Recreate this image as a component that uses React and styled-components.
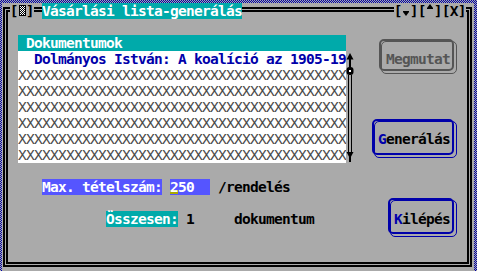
import React from "react";
import styled, { createGlobalStyle, css } from "styled-components";

const C = {
  gray: "#aaaaaa",
  teal: "#00aaaa",
  blue: "#0000aa",
  lblue: "#5555ff",
  dgray: "#555555",
  white: "#ffffff",
  black: "#000000",
  olive: "#aaaa00",
};

const GlobalStyle = createGlobalStyle`
  html, body { margin: 0; padding: 0; }
  body {
    width: 477px;
    height: 271px;
    overflow: hidden;
    background-color: ${C.gray};
    background-image: conic-gradient(${C.blue} 25%, transparent 0 50%, ${C.blue} 0 75%, transparent 0);
    background-size: 2px 2px;
  }
`;

const Screen = styled.div`
  box-sizing: border-box;
  width: 477px;
  height: 271px;
  padding: 3px 3px 0 2px;
  overflow: hidden;
`;

const Window = styled.div`
  display: grid;
  grid-template-columns: repeat(59, 8px);
  grid-template-rows: repeat(17, 16px);
  background: ${C.gray};
  font-family: "DejaVu Sans Mono", monospace;
  font-weight: bold;
  font-size: 14.5px;
  letter-spacing: -0.73px;
  line-height: 16px;
  color: ${C.black};
  white-space: pre;
`;

const place = css`
  grid-column: ${(p) => p.$col} / span ${(p) => p.$span || 1};
  grid-row: ${(p) => p.$row} / span ${(p) => p.$rows || 1};
`;

/* window frame: double line drawn as two nested outlines */
const Frame = styled.div`
  grid-column: 1 / -1;
  grid-row: 1 / -1;
  margin: 4px 2px 8px 1px;
  border: 2px solid ${C.black};
  padding: 1px;
  display: flex;
`;
const FrameInner = styled.div`
  flex: 1;
  border: 2px solid ${C.black};
`;

const TitleGroup = styled.div`
  ${place}
  display: flex;
  background: ${C.gray};
`;

const Cell = styled.span`
  display: flex;
  width: 8px;
  height: 16px;
  letter-spacing: 0;
  justify-content: center;
  align-items: ${(p) => p.$align || "center"};
`;

const Dither = styled.span`
  box-sizing: border-box;
  width: 7px;
  height: 11px;
  margin-top: 2px;
  border: 1px solid ${C.black};
  background-color: ${C.white};
  background-image: conic-gradient(${C.black} 25%, transparent 0 50%, ${C.black} 0 75%, transparent 0);
  background-size: 2px 2px;
`;

const TitleText = styled.div`
  ${place}
  background: ${C.teal};
  color: ${C.white};
`;

const ListHeader = styled.div`
  ${place}
  background: ${C.teal};
  color: ${C.white};
  padding-left: 8px;
`;

const ListBody = styled.div`
  ${place}
  background: ${C.white};
  display: flex;
  flex-direction: column;
  overflow: hidden;
`;

const ListRow = styled.div`
  height: 16px;
  flex: none;
  overflow: hidden;
  padding-left: ${(p) => p.$indent || 0}px;
  color: ${(p) => p.$fg || C.black};
  font-weight: ${(p) => (p.$thin ? "normal" : "bold")};
`;

const ScrollBar = styled.div`
  ${place}
  display: flex;
`;

const Button = styled.div`
  ${place}
  position: relative;
  box-sizing: border-box;
  margin: ${(p) => `-${p.$pad[0]}px -${p.$pad[1]}px -${p.$pad[2]}px -${p.$pad[3]}px`};
  padding: ${(p) => `${p.$pad[0] - 2}px ${p.$pad[1] - 2}px ${p.$pad[2] - 2}px ${p.$pad[3] - 2}px`};
  border: 2px solid ${(p) => p.$tone};
  border-radius: 5px;
  color: ${(p) => (p.$disabled ? C.dgray : C.black)};
  &::after {
    content: "";
    position: absolute;
    left: 0;
    top: 0;
    right: -5px;
    bottom: -5px;
    border: 1px solid ${(p) => p.$tone};
    border-radius: 5px;
  }
`;

const Hotkey = styled.span`
  color: ${C.blue};
`;

const FieldLabel = styled.div`
  ${place}
  background: ${(p) => p.$bg};
  color: ${C.white};
`;

const FieldInput = styled.div`
  ${place}
  display: flex;
  background: ${C.lblue};
  color: ${C.white};
`;

const CursorChar = styled.span`
  display: block;
  width: 8px;
  height: 16px;
  background: linear-gradient(to top, transparent 1px, ${C.olive} 1px, ${C.olive} 5px, transparent 5px);
`;

const PlainText = styled.div`
  ${place}
  color: ${C.black};
`;

const ArrowDown = () => (
  <svg width="8" height="16" viewBox="0 0 8 16">
    <polygon points="1,9 7,9 4,13" fill={C.black} />
    <rect x="1" y="8" width="6" height="1" fill={C.black} />
  </svg>
);

const ArrowUp = () => (
  <svg width="8" height="16" viewBox="0 0 8 16">
    <polygon points="4,1 7,5 1,5" fill={C.black} />
    <rect x="1" y="5" width="6" height="1" fill={C.black} />
  </svg>
);

const ScrollGraphic = () => (
  <svg width="8" height="112" viewBox="0 0 8 112">
    <polygon points="4,2 7.5,8.5 0.5,8.5" fill={C.black} />
    <rect x="3" y="8" width="2" height="8" fill={C.black} />
    <rect x="0.5" y="16" width="7" height="8" rx="3" fill={C.black} />
    <rect x="3" y="19" width="2" height="2" fill={C.white} />
    <rect x="2" y="24" width="1" height="77" fill={C.black} />
    <rect x="5" y="24" width="1" height="77" fill={C.black} />
    <polygon points="0.5,101 7.5,101 4,107.5" fill={C.black} />
    <rect x="3" y="106" width="2" height="5" fill={C.black} />
  </svg>
);

const xRow = "X".repeat(41);

export default function App() {
  return (
    <>
      <GlobalStyle />
      <Screen>
        <Window>
          <Frame>
            <FrameInner />
          </Frame>

          <TitleGroup $col={2} $span={3} $row={1}>
            <Cell>[</Cell>
            <Cell $align="flex-start">
              <Dither />
            </Cell>
            <Cell>]</Cell>
          </TitleGroup>
          <TitleText $col={6} $span={25} $row={1}>
            Vásárlási lista-generálás
          </TitleText>
          <TitleGroup $col={50} $span={9} $row={1}>
            <Cell>[</Cell>
            <Cell>
              <ArrowDown />
            </Cell>
            <Cell>]</Cell>
            <Cell>[</Cell>
            <Cell>
              <ArrowUp />
            </Cell>
            <Cell>]</Cell>
            <Cell>[</Cell>
            <Cell>X</Cell>
            <Cell>]</Cell>
          </TitleGroup>

          <ListHeader $col={3} $span={41} $row={3}>
            Dokumentumok
          </ListHeader>
          <ListBody $col={3} $span={41} $row={4} $rows={7}>
            <ListRow $indent={16} $fg={C.blue}>
              Dolmányos István: A koalíció az 1905-19
            </ListRow>
            {[0, 1, 2, 3, 4, 5].map((i) => (
              <ListRow key={i} $thin $fg="#4a4a4a">
                {xRow}
              </ListRow>
            ))}
          </ListBody>
          <ScrollBar $col={44} $row={4} $rows={7}>
            <ScrollGraphic />
          </ScrollBar>

          <Button $col={49} $span={8} $row={4} $pad={[12, 4, 4, 7]} $tone={C.dgray} $disabled>
            Megmutat
          </Button>
          <Button $col={48} $span={9} $row={9} $pad={[12, 4, 8, 6]} $tone={C.blue}>
            <Hotkey>G</Hotkey>enerálás
          </Button>
          <Button $col={50} $span={7} $row={14} $pad={[13, 4, 7, 6]} $tone={C.blue}>
            <Hotkey>K</Hotkey>ilépés
          </Button>

          <FieldLabel $col={6} $span={15} $row={12} $bg={C.lblue}>
            Max. tételszám:
          </FieldLabel>
          <FieldInput $col={22} $span={5} $row={12}>
            <CursorChar>2</CursorChar>50
          </FieldInput>
          <PlainText $col={28} $span={9} $row={12}>
            /rendelés
          </PlainText>

          <FieldLabel $col={14} $span={9} $row={14} $bg={C.teal}>
            Összesen:
          </FieldLabel>
          <PlainText $col={24} $row={14}>
            1
          </PlainText>
          <PlainText $col={30} $span={10} $row={14}>
            dokumentum
          </PlainText>
        </Window>
      </Screen>
    </>
  );
}
